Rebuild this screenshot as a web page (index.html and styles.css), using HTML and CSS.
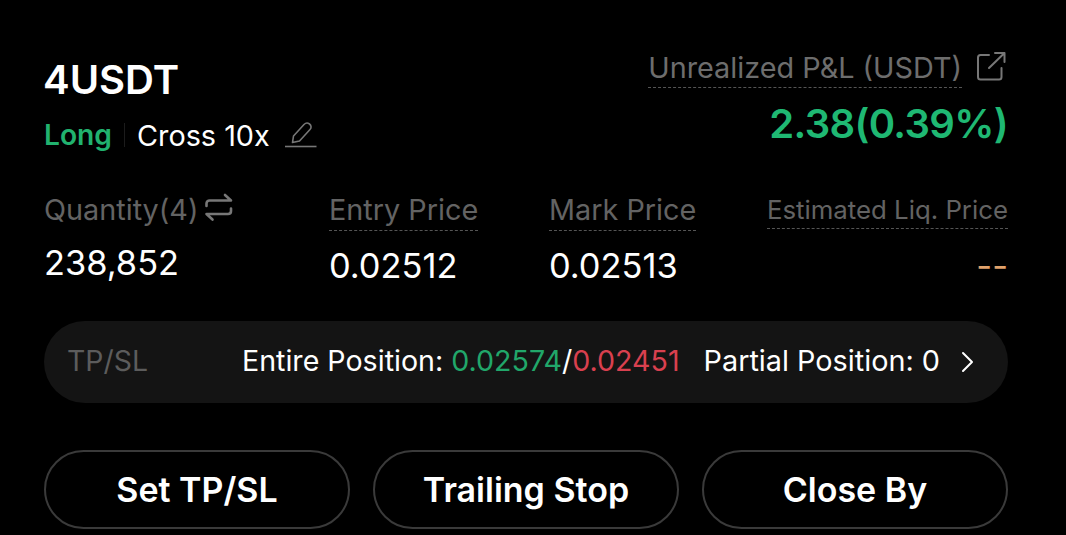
FILE: index.html
```html
<!DOCTYPE html>
<html lang="en">
<head>
    <meta charset="UTF-8">
    <title>Position</title>
    <link rel="stylesheet" href="styles.css">
</head>
<body>
    <div class="position">
        <!-- Header -->
        <div class="head">
            <div class="head-left">
                <div class="symbol">4USDT</div>
                <div class="tags">
                    <span class="side">Long</span>
                    <span class="divider"></span>
                    <span class="margin">Cross 10x</span>
                    <svg class="edit-icon" width="34" height="30" viewBox="0 0 34 30" fill="none" stroke="#777" stroke-width="1.6">
                        <path d="M8.5 22.5 L9.5 16 L20 4.5 C21.5 3 23.5 2.5 25.5 4 C27.5 5.5 27.5 8 26 9.5 L15.5 21 Z" stroke-linejoin="round"/>
                        <path d="M1 26.5 H32.5"/>
                    </svg>
                </div>
            </div>
            <div class="head-right">
                <div class="pnl-label">
                    <span class="dotted">Unrealized P&amp;L (USDT)</span>
                    <svg class="share-icon" width="32" height="30" viewBox="0 0 32 30" fill="none" stroke="#777" stroke-width="2" stroke-linecap="round" stroke-linejoin="round">
                        <path d="M13 4 H4.500 C3 4 2 5 2 6.500 V26 C2 27.500 3 28.500 4.500 28.500 H23 C24.500 28.500 25.500 27.500 25.500 26 V17"/>
                        <path d="M13 17 L28.500 2 M19 2 H28.500 V11"/>
                    </svg>
                </div>
                <div class="pnl-value">2.38(0.39%)</div>
            </div>
        </div>

        <!-- Stats -->
        <div class="stats">
            <div class="stat">
                <div class="stat-label">
                    <span class="qty-label">Quantity(4)</span>
                    <svg class="swap-icon" width="30" height="30" viewBox="0 0 30 30" fill="none" stroke="#777" stroke-width="2.600" stroke-linecap="round" stroke-linejoin="round">
                        <path d="M2.500 13 V10.500 C2.500 8.500 4 7.500 5.500 7.500 H27 L21 2"/>
                        <path d="M27 15.500 V18 C27 20 25.500 21 24 21 H2.500 L8.500 26.500"/>
                    </svg>
                </div>
                <div class="stat-value qty">238,852</div>
            </div>
            <div class="stat">
                <div class="stat-label"><span class="dotted">Entry Price</span></div>
                <div class="stat-value">0.02512</div>
            </div>
            <div class="stat">
                <div class="stat-label"><span class="dotted">Mark Price</span></div>
                <div class="stat-value">0.02513</div>
            </div>
            <div class="stat stat-end">
                <div class="stat-label small"><span class="dotted">Estimated Liq. Price</span></div>
                <div class="stat-value liq">--</div>
            </div>
        </div>

        <!-- TP/SL -->
        <div class="tpsl">
            <span class="tpsl-label">TP/SL</span>
            <div class="tpsl-info">
                <span>Entire Position: <span class="up">0.02574</span>/<span class="down">0.02451</span></span>
                <span class="partial">Partial Position: 0</span>
                <svg class="chevron" width="14" height="24" viewBox="0 0 14 24" fill="none" stroke="#fff" stroke-width="2" stroke-linecap="round" stroke-linejoin="round">
                    <path d="M2 3 L11 12 L2 21"/>
                </svg>
            </div>
        </div>

        <!-- Actions -->
        <div class="actions">
            <button class="action">Set TP/SL</button>
            <button class="action">Trailing Stop</button>
            <button class="action">Close By</button>
        </div>
    </div>
</body>
</html>
```

FILE: styles.css
```css
/* Global Styles */
html, body {
    margin: 0;
    height: 535px;
    overflow: hidden;
    background-color: #000;
}

body {
    font-family: 'Inter', 'Liberation Sans', sans-serif;
    color: #fff;
}

.position {
    padding: 50px 58px 0 44px;
}

/* Header */
.head {
    display: flex;
    justify-content: space-between;
    height: 103px;
}

.symbol {
    font-size: 40px;
    font-weight: 600;
    line-height: 60px;
    margin-left: -1px;
}

.tags {
    display: flex;
    align-items: center;
    height: 36px;
    margin-top: 7px;
}

.side {
    font-size: 28.2px;
    font-weight: 600;
    color: #21b26f;
}

.divider {
    width: 1px;
    height: 24px;
    margin: 0 12px;
    background-color: #1c1c1c;
}

.margin {
    font-size: 28.8px;
}

.edit-icon {
    margin-left: 14px;
}

.head-right {
    display: flex;
    flex-direction: column;
    align-items: flex-end;
}

.pnl-label {
    display: flex;
    align-items: flex-start;
    gap: 14px;
    font-size: 28.8px;
    color: #6d6d6d;
}

.share-icon {
    margin-top: 1px;
}

.dotted {
    padding-bottom: 2px;
    border-bottom: 1.5px dashed #555;
}

.stat-label .dotted {
    padding-bottom: 3px;
}

.pnl-value {
    margin-top: 11px;
    font-size: 40px;
    font-weight: 600;
    line-height: 50px;
    letter-spacing: -0.65px;
    color: #1fb873;
}

/* Stats */
.stats {
    display: grid;
    grid-template-columns: 285px 220px 1fr auto;
    margin-top: 38px;
}

.stat-label {
    display: flex;
    align-items: center;
    gap: 6px;
    height: 40px;
    font-size: 28.8px;
    color: #636363;
}

.stat-label.small {
    font-size: 25.8px;
}

.qty-label {
    margin-top: -4px;
}

.swap-icon {
    margin-top: -7px;
}

.stat-value {
    margin-top: 15px;
    font-size: 34.4px;
    line-height: 40px;
}

.stat-value.qty {
    margin-top: 12px;
}

.stat-end {
    display: flex;
    flex-direction: column;
    align-items: flex-end;
}

.liq {
    color: #e0a36c;
}

/* TP/SL */
.tpsl {
    display: flex;
    justify-content: space-between;
    align-items: center;
    box-sizing: border-box;
    height: 82px;
    margin-top: 35px;
    padding: 0 33px 4px 23px;
    border-radius: 41px;
    background-color: #141414;
}

.tpsl-label {
    font-size: 28.4px;
    color: #5c5c5c;
}

.tpsl-info {
    display: flex;
    align-items: center;
    font-size: 28.6px;
}

.partial {
    margin-left: 24px;
    font-size: 28.8px;
}

.chevron {
    margin-left: 21px;
    margin-top: 4px;
}

.up {
    color: #21a76a;
}

.down {
    color: #d9404f;
}

/* Actions */
.actions {
    display: grid;
    grid-template-columns: repeat(3, 1fr);
    gap: 23px;
    margin-top: 47px;
}

.action {
    height: 79px;
    border: 2.5px solid #3a3a3a;
    border-radius: 40px;
    background-color: #000;
    color: #fff;
    font-family: inherit;
    font-size: 34px;
    font-weight: 600;
}
```
